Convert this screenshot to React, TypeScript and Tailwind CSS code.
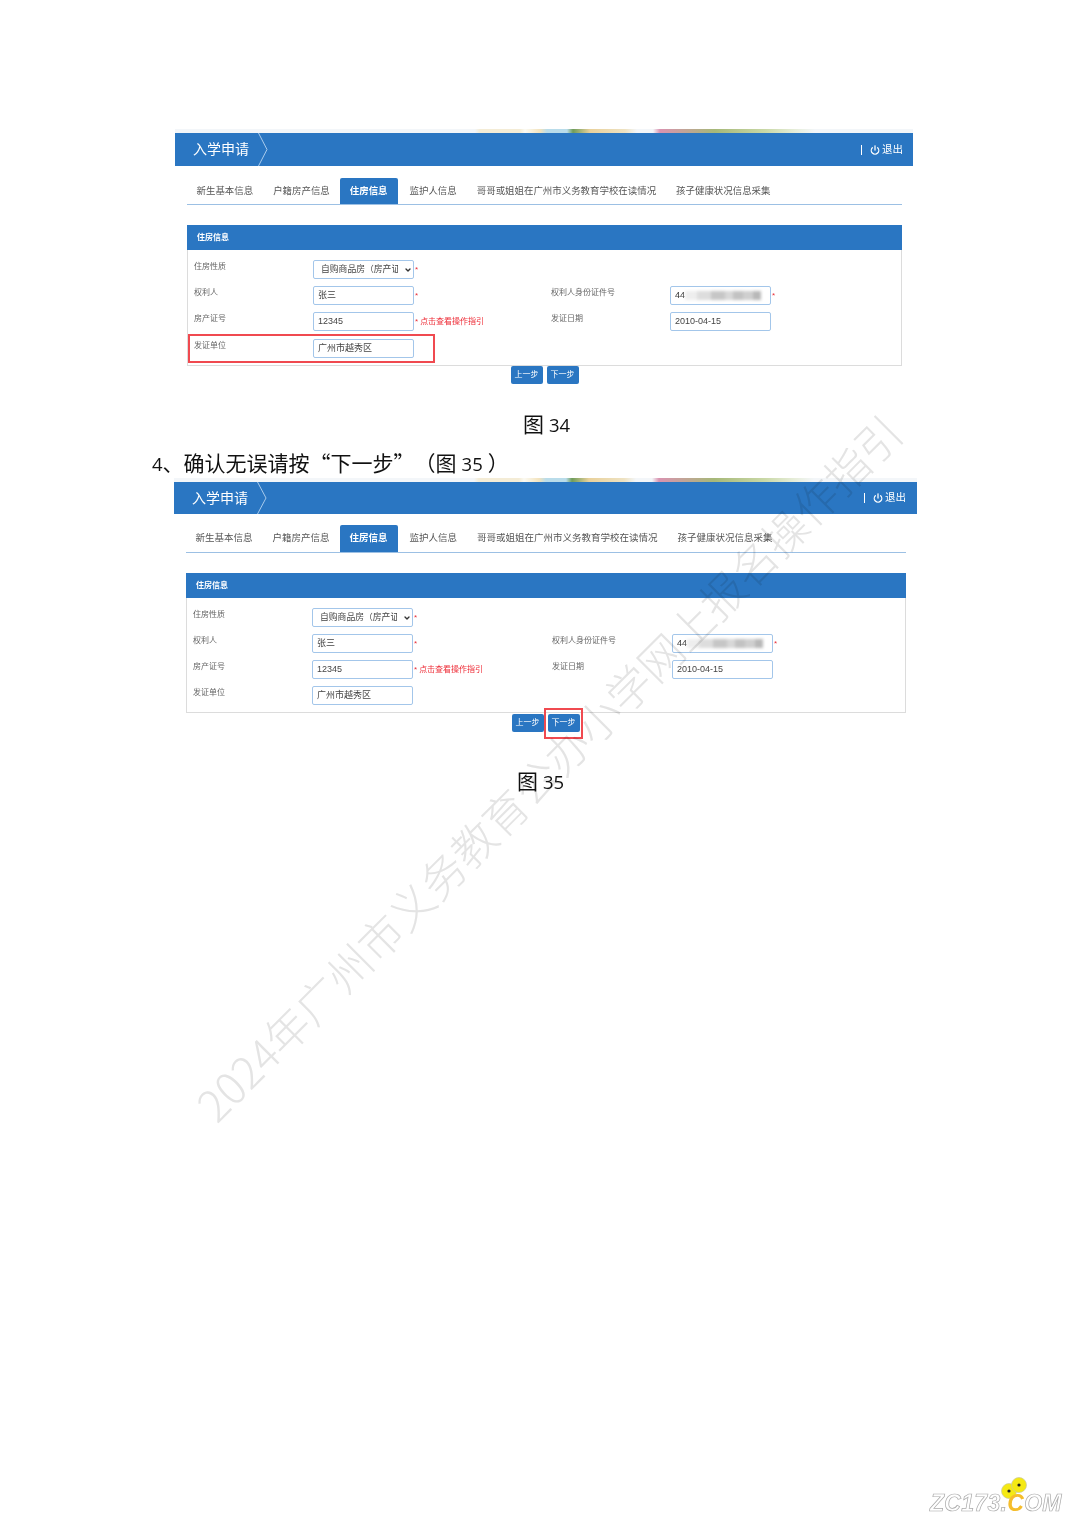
import { ChevronDown, Power } from "lucide-react";

const cjk = "font-['Liberation_Sans','Noto_Sans_CJK_SC',sans-serif]";
const han = "font-['Noto_Sans_CJK_SC',sans-serif] [text-spacing-trim:space-all]";
const latin = "font-['Open_Sans',sans-serif] text-[18.5px] leading-none";

const tabs = ["新生基本信息", "户籍房产信息", "住房信息", "监护人信息", "哥哥或姐姐在广州市义务教育学校在读情况", "孩子健康状况信息采集"];

const boxClass = "flex h-[19px] w-[101px] items-center overflow-hidden rounded-[2px] border border-[#a3c6ea] bg-white px-[4px] text-[9px] text-[#444]";

function Field({ children, note }: { children: React.ReactNode; note?: boolean }) {
  return (
    <div className="flex items-center">
      <div className={boxClass}>{children}</div>
      <span className="ml-px text-[8px] leading-none text-[#e8303a]">*</span>
      {note && <span className="ml-[2px] text-[8px] whitespace-nowrap text-[#ee2b36]">点击查看操作指引</span>}
    </div>
  );
}

function Label({ text, className }: { text: string; className: string }) {
  return <div className={`pt-px text-[8px] leading-[12px] text-[#666] ${className}`}>{text}</div>;
}

function Figure({
  width,
  headerHeight,
  tabsGap,
  tabHeight,
  tabText,
  col1,
  col2,
  rightPad,
  btnOffset,
  lastRow,
  children,
}: {
  width: string;
  headerHeight: string;
  tabsGap: string;
  tabHeight: string;
  tabText: string;
  col1: string;
  col2: string;
  rightPad: string;
  btnOffset: string;
  lastRow: string;
  children?: React.ReactNode;
}) {
  return (
    <section className={`relative blur-[0.3px] ${width} ${cjk}`}>
      {/* banner picture peeking over the header */}
      <div className="h-[4px] bg-[linear-gradient(90deg,#f3f6f9_0,#f3f6f9_300px,#f4ecd6_305px,#f4ecd6_345px,#fbfaf3_350px,#f3e3bd_365px,#b9dcea_372px,#b9dcea_392px,#6f9c5a_398px,#e9d19b_415px,#eee2c2_450px,#f3f6f9_462px,#f3f6f9_478px,#d993b0_485px,#a6b878_540px,#c9d8a6_590px,#e6edd9_620px,#f3f6f9_640px)]" />
      <header className={`flex items-center bg-[#2a76c2] text-white ${headerHeight}`}>
        <h1 className="pl-[18px] text-[14px]">入学申请</h1>
        <svg viewBox="0 0 10 33" preserveAspectRatio="none" className="ml-[9px] h-full w-[10px]" fill="none" stroke="#a9cbec" strokeWidth="1">
          <path d="M0.5 0 L9 16.5 L0.5 33" />
        </svg>
        <div className={`ml-auto flex items-center text-[10.5px] ${rightPad}`}>
          <span className="mr-[8px] h-[10px] w-px bg-white" />
          <Power size={10} strokeWidth={3} />
          <span className="ml-[2px]">退出</span>
        </div>
      </header>

      <div className={`mr-[11px] ml-[12px] ${tabsGap}`}>
        <nav className="-ml-[0.5px] flex border-b border-[#9cc0e4]">
          {tabs.map((t, i) => (
            <div
              key={t}
              className={`flex items-center px-[10px] whitespace-nowrap ${tabHeight} ${tabText} ${
                i === 2 ? "mr-[2px] rounded-t-[2px] bg-[#2a76c2] font-bold text-white" : "text-[#555]"
              }`}
            >
              {t}
            </div>
          ))}
        </nav>

        <div className="mt-[20px] border border-t-0 border-[#dcdcdc] bg-white">
          <div className="-mx-px flex h-[25px] items-center bg-[#2a76c2] pl-[10px] text-[8px] font-bold text-white">住房信息</div>
          <div className="flex flex-col gap-[7px] pt-[10px] pb-[7px]">
            <div className="flex">
              <Label text="住房性质" className="w-[125px] pl-[6px]" />
              <div className="flex items-center">
                <div className="relative h-[19px] w-[101px]">
                  <select
                    defaultValue="a"
                    className="block h-full w-full appearance-none rounded-[2px] border border-[#a3c6ea] bg-white pr-[15px] pl-[7px] text-[8.8px] text-[#444]"
                  >
                    <option value="a">自购商品房（房产证）</option>
                  </select>
                  <ChevronDown size={8} strokeWidth={4} className="pointer-events-none absolute top-[6px] right-[2px] text-[#333]" />
                </div>
                <span className="ml-px text-[8px] leading-none text-[#e8303a]">*</span>
              </div>
            </div>
            <div className="flex">
              <Label text="权利人" className="w-[125px] pl-[6px]" />
              <div className={col1}>
                <Field>张三</Field>
              </div>
              <Label text="权利人身份证件号" className={col2} />
              <Field>
                <span className="text-[#333]">44</span>
                <span className="flex h-[9px] flex-1 blur-[1.5px]">
                  <span className="w-[12px] bg-[#eeeeee]" />
                  <span className="w-[14px] bg-[#dddddd]" />
                  <span className="w-[14px] bg-[#c6c6c6]" />
                  <span className="w-[8px] bg-[#d8d8d8]" />
                  <span className="w-[10px] bg-[#c2c2c2]" />
                  <span className="w-[10px] bg-[#cfcfcf]" />
                  <span className="w-[8px] bg-[#b8b8b8]" />
                </span>
              </Field>
            </div>
            <div className="flex">
              <Label text="房产证号" className="w-[125px] pl-[6px]" />
              <div className={col1}>
                <Field note>12345</Field>
              </div>
              <Label text="发证日期" className={col2} />
              <div className={boxClass}>2010-04-15</div>
            </div>
            <div className={`flex ${lastRow}`}>
              <Label text="发证单位" className="w-[125px] pl-[6px]" />
              <div className={boxClass}>广州市越秀区</div>
            </div>
          </div>
        </div>
      </div>

      <div className={`flex justify-center gap-[4px] ${btnOffset}`}>
        {["上一步", "下一步"].map((b) => (
          <button key={b} className="h-[18px] w-[32px] rounded-[2px] bg-[#2a76c2] text-[8px] text-white">
            {b}
          </button>
        ))}
      </div>
      {children}
    </section>
  );
}

export default function App() {
  return (
    <div className="relative h-[1526px] w-[1080px] overflow-hidden bg-white pt-[129px]">
      <div className="ml-[175px]">
        <Figure
          width="w-[738px]"
          headerHeight="h-[33px]"
          tabsGap="mt-[12px]"
          tabHeight="h-[26px]"
          tabText="text-[9.45px]"
          col1="w-[238px]"
          col2="w-[119px]"
          rightPad="pr-[10px]"
          btnOffset="pl-[1px]"
          lastRow="mt-px"
        >
          <div className="absolute top-[205px] left-[13px] h-[29px] w-[247px] border-2 border-[#f04a50]" />
        </Figure>
      </div>
      <p className={`mt-[25px] h-[28px] pl-[523px] text-[21px] leading-[28px] text-[#111] ${han}`}>
        图<span className={`ml-[5px] ${latin}`}>34</span>
      </p>
      <p className={`mt-[11px] h-[28px] pl-[152px] text-[21px] leading-[28px] text-[#111] ${han}`}>
        <span className={latin}>4</span>、确认无误请按“下一步”（图<span className={`mx-[5px] ${latin}`}>35</span>）
      </p>
      <div className="mt-[2px] ml-[174px]">
        <Figure
          width="w-[743px]"
          headerHeight="h-[32px]"
          tabsGap="mt-[11px]"
          tabHeight="h-[27px]"
          tabText="text-[9.5px]"
          col1="w-[240px]"
          col2="w-[120px]"
          rightPad="pr-[11px]"
          btnOffset="mt-px"
          lastRow=""
        >
          <div className="absolute top-[230px] left-[370px] h-[31px] w-[39px] border-2 border-[#f04a50]" />
        </Figure>
      </div>
      <p className={`mt-[34px] h-[28px] pl-[517px] text-[21px] leading-[28px] text-[#111] ${han}`}>
        图<span className={`ml-[5px] ${latin}`}>35</span>
      </p>

      {/* watermark */}
      <div className="pointer-events-none absolute top-[767px] left-[548px] -translate-x-1/2 -translate-y-1/2 -rotate-45 font-['Noto_Sans_CJK_SC',sans-serif] text-[44px] font-light whitespace-nowrap text-[#e4e4e4] mix-blend-multiply">
        2024年广州市义务教育公办小学网上报名操作指引
      </div>

      {/* site logo */}
      <div className="absolute top-[1478px] left-[930px] h-[38px] w-[134px]">
        <svg viewBox="0 0 30 24" className="absolute -top-px left-[70px] h-[24px] w-[30px]">
          <circle cx="9" cy="14" r="7.5" fill="#f5e914" stroke="#c9c9a0" strokeWidth="0.7" />
          <circle cx="19" cy="8" r="7.5" fill="#f5e914" stroke="#c9c9a0" strokeWidth="0.7" />
          <circle cx="9" cy="14" r="1.6" fill="#222" />
          <circle cx="19" cy="8" r="1.6" fill="#222" />
        </svg>
        <div className="absolute top-[11px] left-0 font-['Liberation_Sans',sans-serif] text-[23px] leading-[28px] font-bold tracking-[0.3px] whitespace-nowrap text-white italic [-webkit-text-stroke:0.7px_#aaaaaa]">
          ZC173.<span className="text-[#f5bd2c] [-webkit-text-stroke:0]">C</span>OM
        </div>
      </div>
    </div>
  );
}
